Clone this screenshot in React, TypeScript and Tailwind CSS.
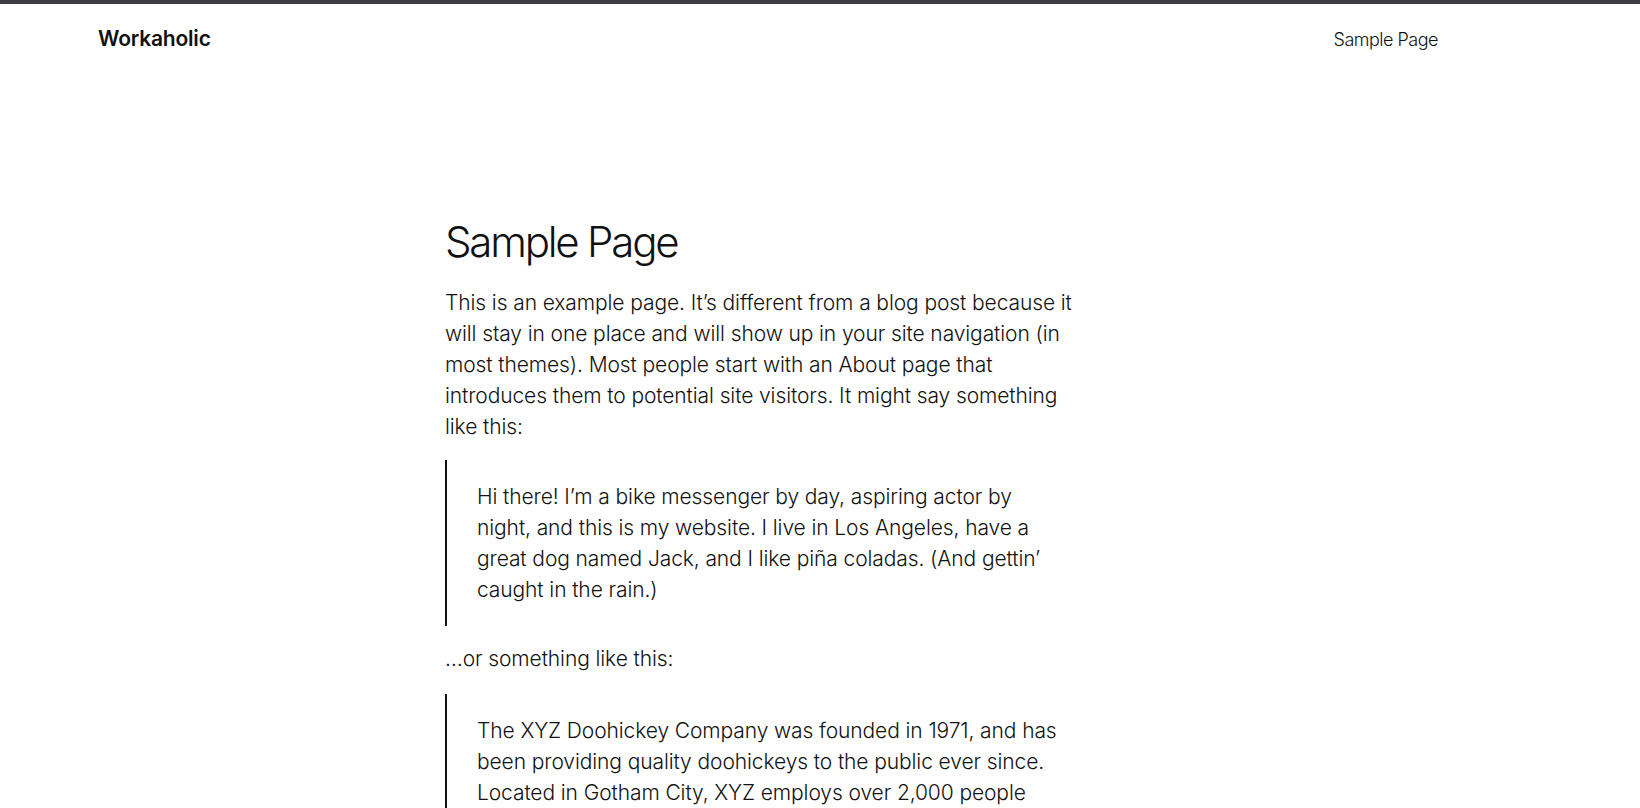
export default function App() {
  return (
    <div className="min-h-screen bg-white text-[#111111] font-['Inter','Liberation_Sans',sans-serif]">
      <div className="h-[4px] bg-[#3b3c41]" />

      {/* Header */}
      <header className="flex items-center justify-between pl-[98px] pr-[202px] h-[72px] -mt-[4px] pt-[6px]">
        <a className="text-[21px] font-semibold tracking-[-0.2px]">Workaholic</a>
        <nav>
          <a className="text-[18px] font-light tracking-[-0.5px]">Sample Page</a>
        </nav>
      </header>

      {/* Content */}
      <main className="ml-[445px] w-[640px] pt-[145px]">
        <h1 className="text-[42px] font-light leading-[1.2] tracking-[-2.2px] mb-[20px]">Sample Page</h1>

        <p className="text-[21px] font-light leading-[31px] tracking-[-0.1px]">
          This is an example page. It’s different from a blog post because it will stay in one place and will
          show up in your site navigation (in most themes). Most people start with an About page that introduces
          them to potential site visitors. It might say something like this:
        </p>

        <blockquote className="mt-[18px] border-l-2 border-[#111111] pl-[30px] py-[21px] pr-[25px]">
          <p className="text-[21px] font-light leading-[31px] tracking-[-0.1px]">
            Hi there! I’m a bike messenger by day, aspiring actor by night, and this is my website. I live in Los
            Angeles, have a great dog named Jack, and I like piña coladas. (And gettin’ caught in the rain.)
          </p>
        </blockquote>

        <p className="mt-[17px] text-[21px] font-light leading-[31px] tracking-[-0.1px]">…or something like this:</p>

        <blockquote className="mt-[20px] border-l-2 border-[#111111] pl-[30px] py-[21px] pr-[25px]">
          <p className="text-[21px] font-light leading-[31px] tracking-[-0.1px]">
            The XYZ Doohickey Company was founded in 1971, and has been providing quality doohickeys to the public
            ever since. Located in Gotham City, XYZ employs over 2,000 people and does all kinds of awesome things
            for the Gotham community.
          </p>
        </blockquote>
      </main>
    </div>
  );
}
